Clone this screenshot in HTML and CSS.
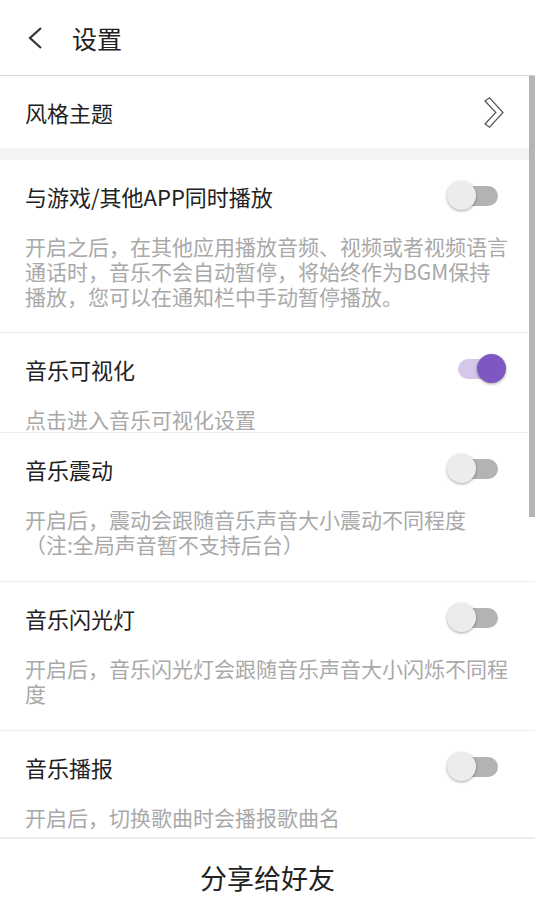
FILE: index.html
```html
<!DOCTYPE html>
<html lang="zh-CN">
<head>
    <meta charset="UTF-8">
    <meta name="viewport" content="width=device-width, initial-scale=1.0">
    <title>设置</title>
    <link rel="stylesheet" href="styles.css">
</head>
<body>
    <div class="page">
        <header class="topbar">
            <svg class="back" width="20" height="24" viewBox="0 0 20 24">
                <polyline points="15,2 4,12 15,22" fill="none" stroke="#333" stroke-width="2.2"/>
            </svg>
            <h1>设置</h1>
        </header>

        <div class="content">
            <div class="row-theme">
                <span>风格主题</span>
                <svg width="20" height="34" viewBox="0 0 20 34">
                    <polygon points="1,4 5.5,0.8 19,15.5 5.5,30.2 1,27 11.8,15.5" fill="none" stroke="#555" stroke-width="1.2" stroke-linejoin="miter"/>
                </svg>
            </div>
            <div class="gap"></div>

            <div class="item first">
                <div class="item-head">
                    <span>与游戏/其他APP同时播放</span>
                    <div class="switch"><span class="track"></span><span class="thumb"></span></div>
                </div>
                <div class="item-desc">开启之后，在其他应用播放音频、视频或者视频语言通话时，音乐不会自动暂停，将始终作为BGM保持播放，您可以在通知栏中手动暂停播放。</div>
            </div>

            <div class="item single">
                <div class="item-head">
                    <span>音乐可视化</span>
                    <div class="switch on"><span class="track"></span><span class="thumb"></span></div>
                </div>
                <div class="item-desc">点击进入音乐可视化设置</div>
            </div>

            <div class="item">
                <div class="item-head">
                    <span>音乐震动</span>
                    <div class="switch"><span class="track"></span><span class="thumb"></span></div>
                </div>
                <div class="item-desc keep-lines">开启后，震动会跟随音乐声音大小震动不同程度
（注:全局声音暂不支持后台）</div>
            </div>

            <div class="item">
                <div class="item-head">
                    <span>音乐闪光灯</span>
                    <div class="switch"><span class="track"></span><span class="thumb"></span></div>
                </div>
                <div class="item-desc">开启后，音乐闪光灯会跟随音乐声音大小闪烁不同程度</div>
            </div>

            <div class="item last">
                <div class="item-head">
                    <span>音乐播报</span>
                    <div class="switch"><span class="track"></span><span class="thumb"></span></div>
                </div>
                <div class="item-desc">开启后，切换歌曲时会播报歌曲名</div>
            </div>

            <div class="scroll-thumb"></div>
        </div>

        <footer class="share">分享给好友</footer>
    </div>
</body>
</html>
```

FILE: styles.css
```css
body {
    margin: 0;
    background-color: #fff;
    font-family: "Noto Sans CJK SC", "Noto Sans", sans-serif;
    color: #222;
}
.page {
    height: 915px;
    display: flex;
    flex-direction: column;
    overflow: hidden;
}
.topbar {
    height: 75px;
    flex-shrink: 0;
    display: flex;
    align-items: center;
    padding-left: 26px;
    border-bottom: 1px solid #d4d4d4;
}
.topbar h1 {
    margin: 0 0 0 26px;
    font-size: 25px;
    font-weight: normal;
    color: #222;
}
.content {
    flex: 1;
    position: relative;
    overflow: hidden;
}
.row-theme {
    height: 72px;
    display: flex;
    align-items: center;
    justify-content: space-between;
    padding: 0 31px 0 25px;
    font-size: 22px;
}
.row-theme svg {
    margin-top: 4px;
}
.gap {
    height: 12px;
    background-color: #f3f3f3;
}
.item {
    padding: 16px 25px 24px 25px;
    border-bottom: 1px solid #eeeeee;
}
.item.first {
    padding-bottom: 23px;
}
.item.single {
    padding-bottom: 0;
}
.item.last {
    padding-bottom: 7px;
}
.item-head {
    height: 40px;
    display: flex;
    align-items: center;
    justify-content: space-between;
    font-size: 22px;
}
.item-desc {
    margin-top: 18px;
    font-size: 21px;
    line-height: 25px;
    color: #a9a9a9;
}
.keep-lines {
    white-space: pre-line;
}
.switch {
    position: relative;
    width: 60px;
    height: 30px;
    margin-right: 3px;
}
.switch .track {
    position: absolute;
    left: 11px;
    top: 5px;
    width: 40px;
    height: 20px;
    border-radius: 10px;
    background-color: #b3b3b3;
}
.switch .thumb {
    position: absolute;
    left: 0;
    top: 0;
    width: 29px;
    height: 29px;
    border-radius: 50%;
    background-color: #ececec;
    box-shadow: 0 1px 3px rgba(0,0,0,0.35);
}
.switch.on .track {
    background-color: #d4c7ea;
}
.switch.on .thumb {
    left: 30px;
    background-color: #7e57c2;
}
.scroll-thumb {
    position: absolute;
    top: 0;
    right: 0;
    width: 6px;
    height: 441px;
    background-color: #b5b5b5;
}
.share {
    flex-shrink: 0;
    height: 76px;
    border-top: 1px solid #ececec;
    display: flex;
    align-items: center;
    justify-content: center;
    font-size: 27px;
    color: #222;
}
```
